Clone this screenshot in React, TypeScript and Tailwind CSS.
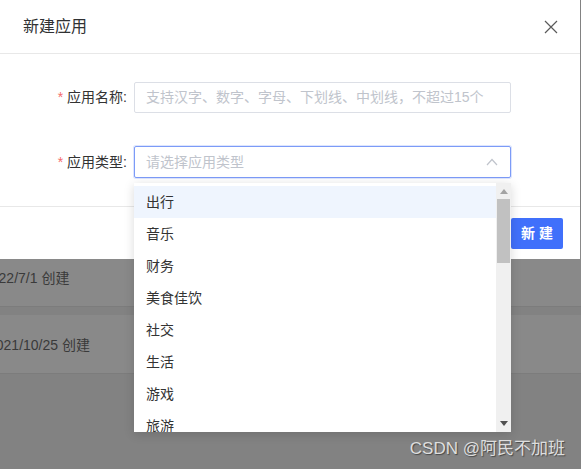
import React from "react";

const items = ["出行", "音乐", "财务", "美食佳饮", "社交", "生活", "游戏", "旅游"];

export default function App() {
  return (
    <div
      className="relative w-[581px] h-[469px] overflow-hidden bg-[#828282]"
      style={{ fontFamily: '"Liberation Sans", "Noto Sans CJK SC", sans-serif' }}
    >
      {/* page behind the overlay */}
      <div className="flex flex-col gap-[8px] pt-[230px]">
        <div className="h-[77px] bg-[#898989] border-b border-[#7c7c7c] flex items-end pb-[17px]">
          <span className="ml-[-17px] text-[14px] text-[#3a3a3a]">2022/7/1 创建</span>
        </div>
        <div className="h-[59px] bg-[#898989] border-b border-[#7c7c7c] flex items-center pt-[3px]">
          <span className="ml-[-12px] text-[14px] text-[#3a3a3a]">2021/10/25 创建</span>
        </div>
      </div>

      {/* modal */}
      <div className="absolute left-0 top-0 w-[580px] h-[259px] bg-white flex flex-col">
        <div className="h-[54px] border-b border-[#e8e8e8] flex items-center justify-between pl-[23px] pr-[22px]">
          <span className="text-[16px] text-[#303133]">新建应用</span>
          <svg width="14" height="14" viewBox="0 0 14 14" className="mt-[1px]">
            <path d="M1 1 L13 13 M13 1 L1 13" stroke="#5a5a5a" strokeWidth="1.2" fill="none" />
          </svg>
        </div>
        <div className="flex flex-col gap-[33px] pt-[28px] pb-[28px] border-b border-[#e8e8e8]">
          <div className="flex items-center">
            <div className="w-[134px] pr-[7px] text-right text-[14px] text-[#333]">
              <span className="text-[#f56c6c] mr-[4px]">*</span>应用名称:
            </div>
            <div className="w-[377px] h-[31px] border border-[#dcdfe6] rounded-[2px] flex items-center px-[11px] text-[14px] text-[#c0c4cc] whitespace-nowrap">
              支持汉字、数字、字母、下划线、中划线，不超过15个
            </div>
          </div>
          <div className="flex items-center">
            <div className="w-[134px] pr-[7px] text-right text-[14px] text-[#333]">
              <span className="text-[#f56c6c] mr-[4px]">*</span>应用类型:
            </div>
            <div className="w-[377px] h-[32px] border border-[#7c9bf7] rounded-[2px] shadow-[0_0_0_1px_rgba(120,150,250,0.25)] flex items-center justify-between pl-[11px] pr-[12px] text-[14px] text-[#c0c4cc]">
              <span>请选择应用类型</span>
              <svg width="12" height="8" viewBox="0 0 12 8">
                <path d="M1 7 L6 1.5 L11 7" stroke="#c0c4cc" strokeWidth="1.2" fill="none" />
              </svg>
            </div>
          </div>
        </div>
        <div className="flex-1 flex items-center justify-end pr-[17px]">
          <button className="w-[52px] h-[31px] bg-[#4070fb] rounded-[2px] text-white text-[14px] font-semibold tracking-[4px] pl-[4px]">
            新建
          </button>
        </div>
      </div>

      {/* dropdown */}
      <div className="absolute left-[134px] top-[183px] w-[377px] h-[249px] bg-white shadow-[0_2px_10px_rgba(0,0,0,0.15)] flex">
        <div className="flex-1 flex flex-col pt-[3px] overflow-hidden">
          {items.map((t, i) => (
            <div
              key={t}
              className={
                "h-[32px] shrink-0 flex items-center pl-[12px] text-[14px] text-[#333] " +
                (i === 0 ? "bg-[#eff5fe]" : "")
              }
            >
              {t}
            </div>
          ))}
        </div>
        <div className="w-[15px] bg-[#f0f0f0] flex flex-col items-center">
          <div className="h-[16px] flex items-center justify-center">
            <svg width="8" height="5" viewBox="0 0 8 5">
              <path d="M0 5 L4 0 L8 5 Z" fill="#a3a3a3" />
            </svg>
          </div>
          <div className="w-[13px] h-[64px] bg-[#c1c1c1]" />
          <div className="flex-1" />
          <div className="h-[16px] flex items-center justify-center mb-[1px]">
            <svg width="8" height="5" viewBox="0 0 8 5">
              <path d="M0 0 L8 0 L4 5 Z" fill="#505050" />
            </svg>
          </div>
        </div>
      </div>

      {/* watermark */}
      <div className="absolute right-[16px] bottom-[8px] text-[17px] text-[#dedede] [text-shadow:1px_1px_1px_rgba(0,0,0,0.45)]">
        CSDN @阿民不加班
      </div>
    </div>
  );
}
